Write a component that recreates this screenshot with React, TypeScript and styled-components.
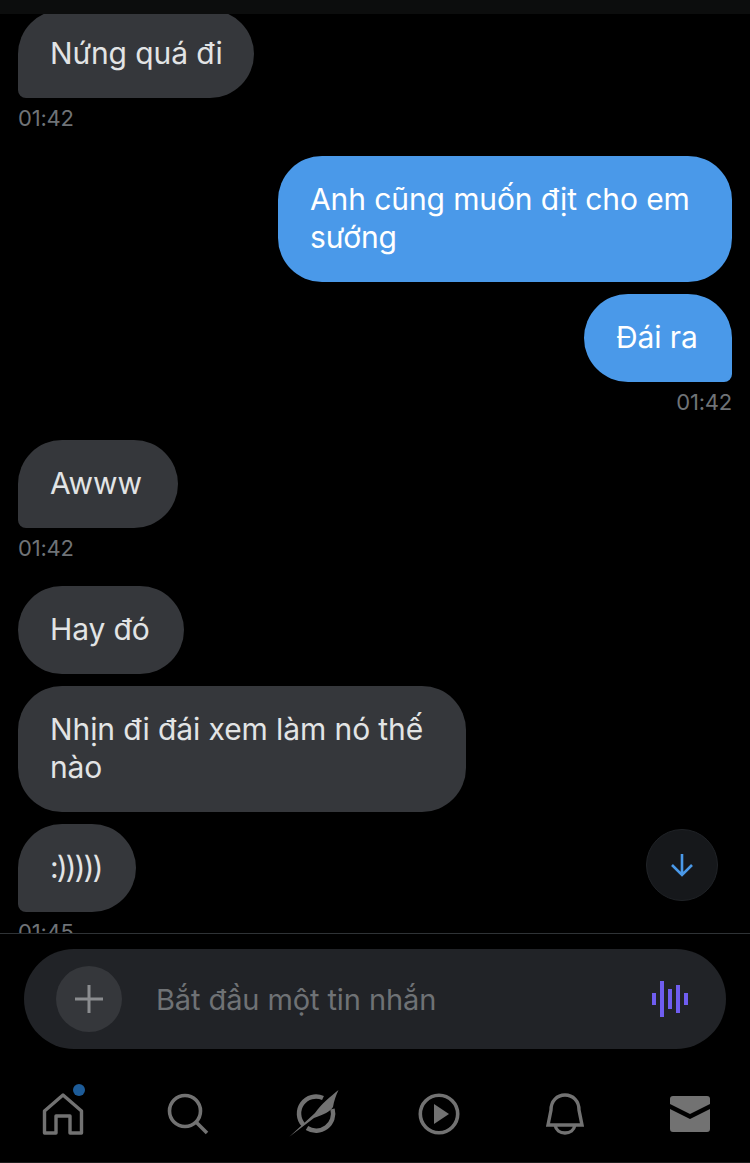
import React from "react";
import styled, { createGlobalStyle } from "styled-components";

const GlobalStyle = createGlobalStyle`
  html, body {
    margin: 0;
    padding: 0;
    background: #000;
  }
`;

const Page = styled.div`
  width: 750px;
  height: 1163px;
  display: flex;
  flex-direction: column;
  background: #000;
  overflow: hidden;
  font-family: Inter, "Noto Sans", sans-serif;
`;

const TopStrip = styled.div`
  height: 14px;
  flex: none;
  background: #0c0d0d;
`;

const Thread = styled.div`
  position: relative;
  flex: 1;
  min-height: 0;
  overflow: hidden;
  border-bottom: 1px solid #2f3336;
`;

const List = styled.div`
  display: flex;
  flex-direction: column;
  gap: 12px;
  margin-top: -4px;
  padding: 0 18px;
`;

const Bubble = styled.div<{ $mine?: boolean; $tail?: boolean; $width: number }>`
  box-sizing: border-box;
  width: ${({ $width }) => $width}px;
  flex: none;
  padding: 24px 0 26px 32px;
  font-size: 30px;
  line-height: 38px;
  letter-spacing: -0.1px;
  white-space: nowrap;
  align-self: ${({ $mine }) => ($mine ? "flex-end" : "flex-start")};
  color: ${({ $mine }) => ($mine ? "#ffffff" : "#e2e4e5")};
  background: ${({ $mine }) => ($mine ? "#4a99e9" : "#35373b")};
  border-radius: 44px;
  ${({ $tail, $mine }) =>
    $tail && ($mine ? "border-bottom-right-radius: 8px;" : "border-bottom-left-radius: 8px;")}
`;

const Smiley = styled.span`
  letter-spacing: -2px;
`;

const Time = styled.div<{ $mine?: boolean }>`
  height: 40px;
  flex: none;
  margin-top: -12px;
  margin-bottom: 6px;
  display: flex;
  align-items: center;
  justify-content: ${({ $mine }) => ($mine ? "flex-end" : "flex-start")};
  font-size: 22px;
  letter-spacing: -0.2px;
  color: #6f7377;
`;

const ScrollDown = styled.div`
  position: absolute;
  right: 32px;
  bottom: 32px;
  width: 72px;
  height: 72px;
  box-sizing: border-box;
  display: flex;
  align-items: center;
  justify-content: center;
  border-radius: 50%;
  background: #16181b;
  border: 1px solid #202327;
`;

const Composer = styled.div`
  flex: none;
  height: 131px;
  box-sizing: border-box;
  padding: 15px 24px 0;
`;

const InputPill = styled.div`
  height: 100px;
  display: flex;
  align-items: center;
  padding: 0 38px 0 32px;
  border-radius: 50px;
  background: #212327;
`;

const PlusButton = styled.div`
  width: 66px;
  height: 66px;
  flex: none;
  display: flex;
  align-items: center;
  justify-content: center;
  border-radius: 50%;
  background: #35373b;
`;

const Placeholder = styled.div`
  flex: 1;
  margin-left: 34px;
  font-size: 29px;
  letter-spacing: -0.1px;
  color: #6f7275;
`;

const Nav = styled.div`
  flex: none;
  height: 98px;
  box-sizing: border-box;
  display: grid;
  grid-template-columns: repeat(6, 125.5px);
  align-items: start;
  padding-top: 24px;
  border-bottom: 1px solid #1c1c1c;
`;

const NavItem = styled.div`
  position: relative;
  height: 50px;
  display: flex;
  align-items: center;
  justify-content: center;
`;

const Dot = styled.span`
  position: absolute;
  left: 73px;
  top: -5px;
  width: 12px;
  height: 12px;
  border-radius: 50%;
  background: #1d5c99;
`;

const GREY = "#727272";

const HomeIcon = () => (
  <svg width="42" height="44" viewBox="0 0 42 44" fill="none" stroke={GREY} strokeWidth="3.4" strokeLinejoin="round">
    <path d="M2.5 19 L21 3 L39.5 19 V41 H28 V24 H14 V41 H2.5 Z" />
  </svg>
);

const SearchIcon = () => (
  <svg width="42" height="42" viewBox="0 0 42 42" fill="none" stroke={GREY} strokeWidth="3.6">
    <circle cx="18" cy="18" r="15.5" />
    <path d="M29 29 L40 40" />
  </svg>
);

const ExploreIcon = () => (
  <svg width="52" height="50" viewBox="0 0 52 50" fill="none">
    <g stroke={GREY} strokeWidth="4.5">
      <path d="M15.5 36 A17 17 0 0 1 35 9" />
      <path d="M44.5 20 A17 17 0 0 1 19 39" />
    </g>
    <path
      d="M50.5 1 C42 8 34 14 27 24 L1.3 47.7 L26 29 C35 26 43 22 45 18 C46 12 48 6 50.5 1 Z"
      fill={GREY}
    />
  </svg>
);

const PlayIcon = () => (
  <svg width="42" height="42" viewBox="0 0 42 42" fill="none">
    <circle cx="21" cy="21" r="18.7" stroke={GREY} strokeWidth="3.6" />
    <path d="M16 11 L31 21 L16 31 Z" fill={GREY} />
  </svg>
);

const BellIcon = () => (
  <svg width="38" height="42" viewBox="0 0 38 42" fill="none" stroke={GREY} strokeWidth="3.4">
    <path d="M2 32 L5 17 C5 8 11 2 19 2 C27 2 33 8 33 17 L36 32 Z" />
    <path d="M9 32 C10 37 14 40 19 40 C24 40 28 37 29 32" />
  </svg>
);

const MailIcon = () => (
  <svg width="40" height="36" viewBox="0 0 40 36" fill={GREY}>
    <path d="M3 0 H37 A3 3 0 0 1 40 3 V8 L20 18 L0 8 V3 A3 3 0 0 1 3 0 Z" />
    <path d="M0 13 L20 23 L40 13 V33 A3 3 0 0 1 37 36 H3 A3 3 0 0 1 0 33 Z" />
  </svg>
);

const WaveIcon = () => (
  <svg width="36" height="36" viewBox="0 0 36 36" fill="#6f5df0">
    <rect x="0" y="12" width="4" height="12" />
    <rect x="8" y="0" width="4" height="36" />
    <rect x="16" y="8" width="4" height="20" />
    <rect x="24" y="4" width="4" height="28" />
    <rect x="32" y="12" width="4" height="12" />
  </svg>
);

export default function App() {
  return (
    <Page>
      <GlobalStyle />
      <TopStrip />
      <Thread>
        <List>
          <Bubble $tail $width={236}>Nứng quá đi</Bubble>
          <Time>01:42</Time>
          <Bubble $mine $width={454}>Anh cũng muốn địt cho em<br />sướng</Bubble>
          <Bubble $mine $tail $width={148}>Đái ra</Bubble>
          <Time $mine>01:42</Time>
          <Bubble $tail $width={160}>Awww</Bubble>
          <Time>01:42</Time>
          <Bubble $width={166}>Hay đó</Bubble>
          <Bubble $width={448}>Nhịn đi đái xem làm nó thế<br />nào</Bubble>
          <Bubble $tail $width={118}><Smiley>:)))))</Smiley></Bubble>
          <Time>01:45</Time>
        </List>
        <ScrollDown>
          <svg width="24" height="24" viewBox="0 0 24 24" fill="none" stroke="#4a99e9" strokeWidth="2.6">
            <path d="M12 1 V22 M2 12 L12 22 L22 12" />
          </svg>
        </ScrollDown>
      </Thread>
      <Composer>
        <InputPill>
          <PlusButton>
            <svg width="30" height="30" viewBox="0 0 30 30" stroke="#8b8d90" strokeWidth="3">
              <path d="M15 1 V29 M1 15 H29" />
            </svg>
          </PlusButton>
          <Placeholder>Bắt đầu một tin nhắn</Placeholder>
          <WaveIcon />
        </InputPill>
      </Composer>
      <Nav>
        <NavItem>
          <HomeIcon />
          <Dot />
        </NavItem>
        <NavItem><SearchIcon /></NavItem>
        <NavItem><ExploreIcon /></NavItem>
        <NavItem><PlayIcon /></NavItem>
        <NavItem><BellIcon /></NavItem>
        <NavItem><MailIcon /></NavItem>
      </Nav>
    </Page>
  );
}
